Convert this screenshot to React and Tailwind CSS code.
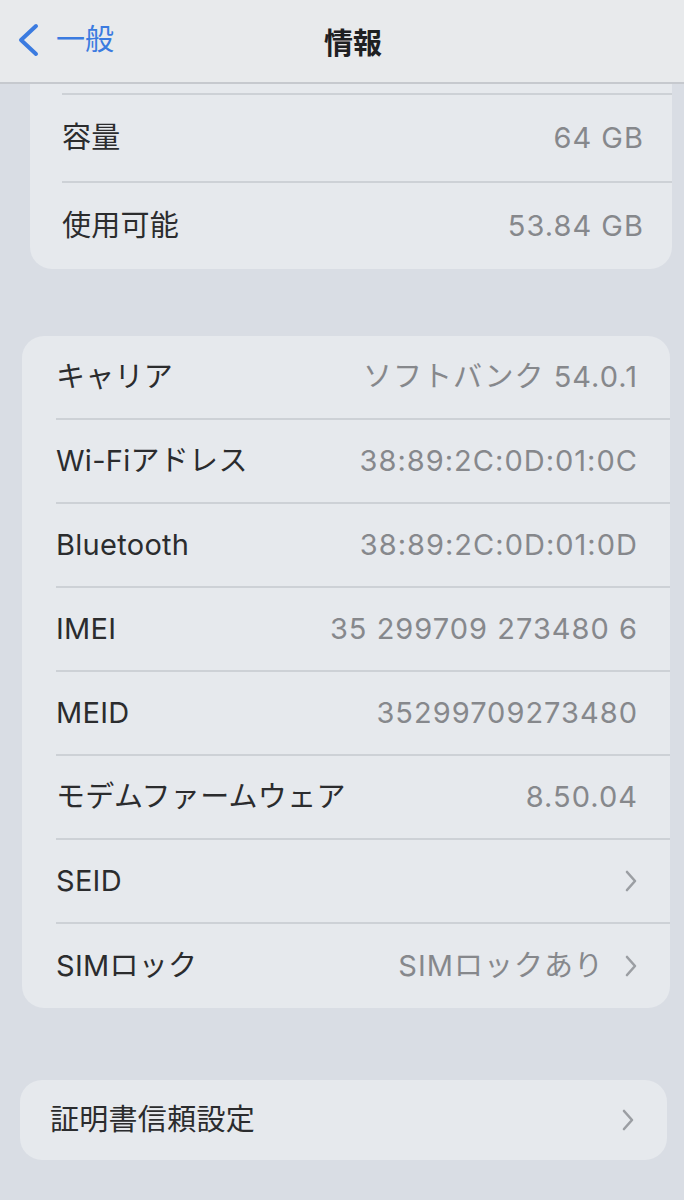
import React from "react"

const font = { fontFamily: 'Inter, "Noto Sans CJK JP", sans-serif' }

function Chevron() {
  return (
    <svg width="14" height="24" viewBox="0 0 14 24" className="ml-5 shrink-0">
      <path d="M3 3 L11 12 L3 21" fill="none" stroke="#9b9ea3" strokeWidth="2.6" strokeLinecap="round" strokeLinejoin="round" />
    </svg>
  )
}

function Row({ label, value, chevron, last, h = "h-[84px]", pr = "pr-[32px]" }) {
  return (
    <div className={`flex flex-col ${h}`}>
      <div className={`flex flex-1 items-center ${pr}`}>
        <span className="text-[29px] text-[#2b2c2e] tracking-[0.01em]">{label}</span>
        <span className="ml-auto text-[29px] text-[#86888c] tracking-[0.035em]">{value}</span>
        {chevron && <Chevron />}
      </div>
      {!last && <div className="h-[2px] bg-[#cdd1d6]" />}
    </div>
  )
}

const rows = [
  ["キャリア", "ソフトバンク 54.0.1"],
  ["Wi-Fiアドレス", "38:89:2C:0D:01:0C"],
  ["Bluetooth", "38:89:2C:0D:01:0D"],
  ["IMEI", "35 299709 273480 6"],
  ["MEID", "35299709273480"],
  ["モデムファームウェア", "8.50.04"],
  ["SEID", "", true],
  ["SIMロック", "SIMロックあり", true],
]

export default function App() {
  return (
    <div className="min-h-[1200px] bg-[#d9dde4] overflow-hidden" style={font}>
      <div className="relative flex h-[84px] items-center border-b-2 border-[#c6c9ce] bg-[#e8eaec]">
        <div className="flex items-center pl-[16px] pb-[2px]">
          <svg width="26" height="36" viewBox="0 0 26 36">
            <path d="M20 4 L5 18 L20 32" fill="none" stroke="#3b7be0" strokeWidth="4" strokeLinecap="round" strokeLinejoin="round" />
          </svg>
          <span className="ml-[14px] text-[29px] text-[#3b7be0]">一般</span>
        </div>
        <span className="absolute left-[22px] right-0 top-[22px] text-center text-[29px] font-semibold text-[#1f2022]">情報</span>
      </div>

      <div className="ml-[30px] mr-[12px] rounded-b-[22px] bg-[#e6e9ed] pl-[32px]">
        <div className="h-[9px]" />
        <div className="h-[2px] bg-[#cdd1d6]" />
        <Row label="容量" value="64 GB" h="h-[88px]" pr="pr-[28px]" />
        <Row label="使用可能" value="53.84 GB" last h="h-[86px]" pr="pr-[28px]" />
      </div>

      <div className="mt-[67px] ml-[22px] mr-[14px] rounded-[22px] bg-[#e6e9ed] pl-[34px]">
        {rows.map(([l, v, c], i) => (
          <Row key={l} label={l} value={v} chevron={c} last={i === rows.length - 1} />
        ))}
      </div>

      <div className="mt-[72px] ml-[20px] mr-[17px] rounded-[22px] bg-[#e6e9ed] pl-[30px]">
        <Row label="証明書信頼設定" value="" chevron last h="h-[80px]" />
      </div>
    </div>
  )
}
